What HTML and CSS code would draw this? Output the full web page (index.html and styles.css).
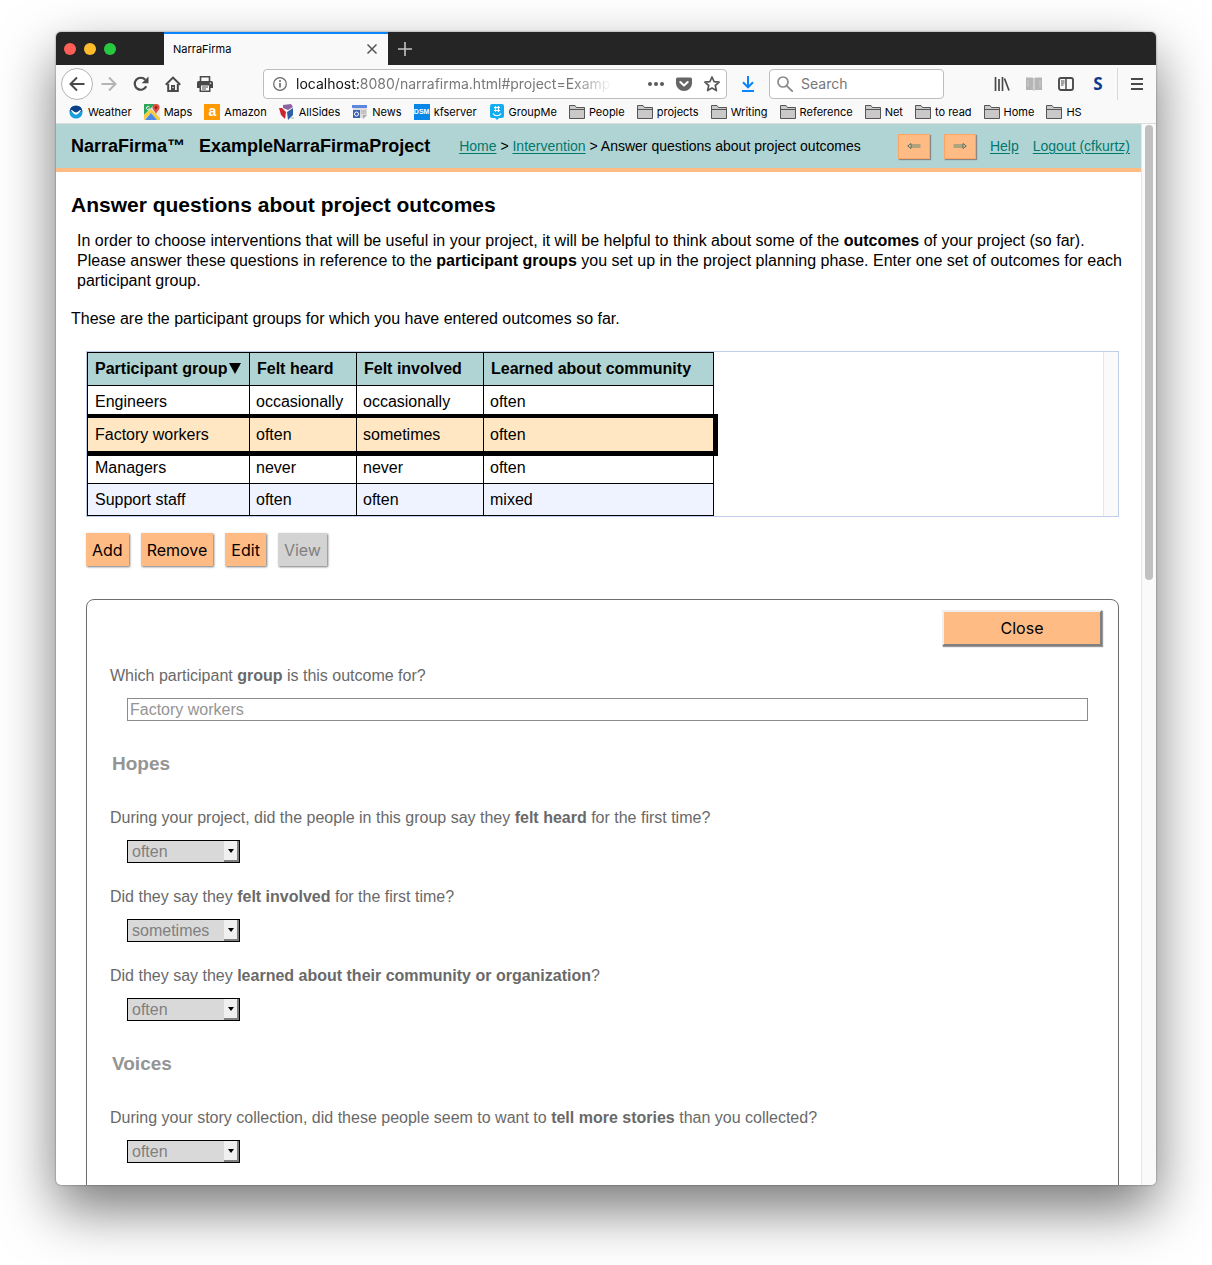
FILE: index.html
```html
<!DOCTYPE html>
<html lang="en">
<head>
<meta charset="utf-8">
<title>NarraFirma</title>
<link rel="stylesheet" href="styles.css">
</head>
<body>
<div class="window">
  <div class="tabbar">
    <div class="lights"><span class="light red"></span><span class="light yellow"></span><span class="light green"></span></div>
    <div class="tab"><span>NarraFirma</span>
      <button class="plain" aria-label="Close tab"><svg width="12" height="12" viewBox="0 0 12 12"><path d="M1.5 1.5l9 9M10.500 1.500l-9 9" stroke="#555" stroke-width="1.500"/></svg></button>
    </div>
    <button class="plain newtab" aria-label="New tab"><svg width="14" height="14" viewBox="0 0 14 14"><path d="M7 0v14M0 7h14" stroke="#c4c4c4" stroke-width="1.600"/></svg></button>
  </div>

  <div class="toolbar">
    <button class="tool back" aria-label="Back"><svg width="16" height="16" viewBox="0 0 16 16"><path d="M15.500 8H1.500M8 1.500L1.500 8L8 14.500" fill="none" stroke="#4a4a4a" stroke-width="2"/></svg></button>
    <button class="tool" aria-label="Forward"><svg width="16" height="16" viewBox="0 0 16 16"><path d="M.5 8h14M8 1.500L14.500 8L8 14.500" fill="none" stroke="#b4b4b4" stroke-width="2"/></svg></button>
    <button class="tool" aria-label="Reload"><svg width="16" height="16" viewBox="0 0 16 16"><path d="M13.200 10.300A6 6 0 1 1 12.300 3.800" fill="none" stroke="#4a4a4a" stroke-width="2.200"/><path d="M15.500 .5v6.800H8.700z" fill="#4a4a4a"/></svg></button>
    <button class="tool" aria-label="Home"><svg width="16" height="16" viewBox="0 0 16 16"><path d="M.8 8.800L8 1.600L15.200 8.800" fill="none" stroke="#4a4a4a" stroke-width="2"/><path d="M3.200 8v7h9.600V8" fill="none" stroke="#4a4a4a" stroke-width="2"/><path d="M6 15V9h4v6z" fill="#4a4a4a"/><circle cx="8" cy="11.500" r=".8" fill="#ddd"/></svg></button>
    <button class="tool" aria-label="Print"><svg width="16" height="16" viewBox="0 0 16 16"><path d="M3.500 5V.8h9V5" fill="none" stroke="#4a4a4a" stroke-width="1.600"/><path d="M1.500 5h13A1.500 1.500 0 0 1 16 6.500V12h-2.500v4h-11v-4H0V6.500A1.500 1.500 0 0 1 1.500 5z" fill="#4a4a4a"/><path d="M4 9.500h8v5H4z" fill="#fff"/><path d="M5 11h6M5 13h4" stroke="#4a4a4a"/><circle cx="13.500" cy="7.300" r=".8" fill="#eee"/></svg></button>
    <div class="space"></div>
    <div class="field urlbar">
      <svg width="14" height="14" viewBox="0 0 14 14"><circle cx="7" cy="7" r="6.300" fill="none" stroke="#666" stroke-width="1.200"/><path d="M7 6v4.500" stroke="#666" stroke-width="1.600"/><circle cx="7" cy="3.900" r="1" fill="#666"/></svg>
      <div class="url"><b>localhost:</b>8080/narrafirma.html#project=Example</div>
      <svg width="16" height="16" viewBox="0 0 16 16"><g fill="#5a5a5a"><circle cx="2" cy="8" r="2"/><circle cx="8" cy="8" r="2"/><circle cx="14" cy="8" r="2"/></g></svg>
      <svg width="16" height="16" viewBox="0 0 16 16"><path d="M1.500 1.500h13A1.500 1.500 0 0 1 16 3v4.500a8 7.500 0 0 1-16 0V3a1.500 1.500 0 0 1 1.500-1.500z" fill="#666"/><path d="M4.300 6L8 9.500L11.700 6" fill="none" stroke="#fff" stroke-width="2" stroke-linecap="round" stroke-linejoin="round"/></svg>
      <svg width="16" height="16" viewBox="0 0 16 16"><path d="M8 1l2.100 4.600 5 .5-3.800 3.400 1.100 5.100L8 12.100l-4.400 2.500 1.100-5.100L.9 6.100l5-.5z" fill="none" stroke="#5a5a5a" stroke-width="1.700" stroke-linejoin="round"/></svg>
    </div>
    <button class="tool download" aria-label="Downloads"><svg width="14" height="16" viewBox="0 0 14 16"><path d="M7 0v11M2 6.300L7 11.300L12 6.300M1 15h12" fill="none" stroke="#0a84ff" stroke-width="2"/></svg></button>
    <div class="field searchbar">
      <svg width="16" height="16" viewBox="0 0 16 16"><circle cx="6" cy="6" r="5" fill="none" stroke="#8a8a8a" stroke-width="1.700"/><path d="M9.800 9.800l5.400 5.400" stroke="#8a8a8a" stroke-width="1.900" stroke-linecap="round"/></svg>
      <input type="text" placeholder="Search" aria-label="Search">
    </div>
    <div class="space"></div>
    <button class="tool" aria-label="Library"><svg width="16" height="16" viewBox="0 0 16 16"><path d="M1.500 1v14M5 3v12M8.500 1v14M10.500 2.500L15 14.500" fill="none" stroke="#4a4a4a" stroke-width="1.700"/></svg></button>
    <button class="tool" aria-label="Reader view"><svg width="16" height="16" viewBox="0 0 16 16"><path d="M0 1.500h6.500L8 2.500l1.500-1H16v12.500H9.500L8 15l-1.500-1H0z" fill="#b5b5b5"/><path d="M8 2.500v12.500" stroke="#f9f9fa" stroke-width=".8"/><path d="M2 4v7M14 4v7" stroke="#ccc"/></svg></button>
    <button class="tool" aria-label="Sidebars"><svg width="16" height="16" viewBox="0 0 16 16"><rect x="1" y="2" width="14" height="12" rx="2" fill="none" stroke="#4a4a4a" stroke-width="1.900"/><path d="M8 2v12" stroke="#4a4a4a" stroke-width="1.500"/><path d="M3 5h3.500M3 7h3.500M3 9h2.500" stroke="#4a4a4a"/></svg></button>
    <button class="tool letter" aria-label="Startpage">S</button>
    <span class="rule"></span>
    <button class="tool" aria-label="Menu"><svg width="12" height="12" viewBox="0 0 12 12"><path d="M0 1h12M0 6h12M0 11h12" stroke="#4a4a4a" stroke-width="2"/></svg></button>
  </div>

  <nav class="bookmarks" aria-label="Bookmarks">
    <a href="#"><svg width="16" height="14" viewBox="0 0 16 16"><circle cx="8" cy="8" r="7.500" fill="#18a0dd"/><path d="M.6 7A7.500 7.500 0 0 1 15.400 7C12 7 11 10 8 10S4 7 .6 7z" fill="#0d3f86"/><path d="M1.500 5.500C5 6 5.500 8.500 8 8.500S11 6 14.500 5.500C12 8 11 11 8 11S4 8 1.500 5.500z" fill="#fff"/></svg>Weather</a>
    <a href="#"><svg width="16" height="16" viewBox="0 0 16 16"><path d="M0 0h16v16H0z" fill="#e8e8e8"/><path d="M0 0h11L0 11z" fill="#2fa55a"/><path d="M0 11L7 5l9 9v2H13L7 9 0 16z" fill="#f6cb3c"/><path d="M1 16l6-7 6 7z" fill="#4a89e8"/><path d="M12 10C11 7 8.500 6 8.500 3.500a3.500 3.500 0 0 1 7 0C15.500 6 13 7 12 10z" fill="#dd4b3e"/><circle cx="12" cy="3.500" r="1.200" fill="#7b2018"/><path d="M5.500 3A1.700 1.700 0 1 0 5.700 5H4.300" fill="none" stroke="#fff"/></svg>Maps</a>
    <a href="#"><span class="badge amazon">a</span>Amazon</a>
    <a href="#"><svg width="16" height="16" viewBox="0 0 16 16"><path d="M4 1l8-1 2 3-5 3-5-2z" fill="#8b62a2"/><path d="M0 4l3 0 4 4-1 7-4-4z" fill="#cc2531"/><path d="M8 8l6-4v7l-5 5z" fill="#2c5fa8"/><path d="M12 14h3" stroke="#aaa"/></svg>AllSides</a>
    <a href="#"><svg width="16" height="16" viewBox="0 0 16 16"><path d="M1 2h14v9l-3 3H1z" fill="#dcdcdc"/><path d="M0 1h15v3H0z" fill="#5c86e0"/><path d="M1 6h7v8H1z" fill="#3c5fb8"/><circle cx="4.500" cy="10" r="2" fill="none" stroke="#fff"/><path d="M9 7h5M9 9h5" stroke="#aaa"/><path d="M11 11h4l-4 4z" fill="#aaa"/></svg>News</a>
    <a href="#"><span class="badge dsm">DSM</span>kfserver</a>
    <a href="#"><svg width="16" height="16" viewBox="0 0 16 16"><path d="M3 0h10a2 2 0 0 1 2 2v10a2 2 0 0 1-2 2h-3l-2 2-2-2H3a2 2 0 0 1-2-2V2a2 2 0 0 1 2-2z" fill="#13aef2"/><path d="M6.500 2v6M9.500 2v6M5 3.500h6M5 6.500h6M4 9.500c2 3 6 3 8 0" fill="none" stroke="#fff" stroke-width="1.200"/></svg>GroupMe</a>
    <a href="#"><svg class="folder" viewBox="0 0 16 14"><path d="M.5 13.500V.5h5.500l1.500 2h8v11z"/><path d="M.5 4.500h15"/></svg>People</a>
    <a href="#"><svg class="folder" viewBox="0 0 16 14"><path d="M.5 13.500V.5h5.500l1.500 2h8v11z"/><path d="M.5 4.500h15"/></svg>projects</a>
    <a href="#"><svg class="folder" viewBox="0 0 16 14"><path d="M.5 13.500V.5h5.500l1.500 2h8v11z"/><path d="M.5 4.500h15"/></svg>Writing</a>
    <a href="#"><svg class="folder" viewBox="0 0 16 14"><path d="M.5 13.500V.5h5.500l1.500 2h8v11z"/><path d="M.5 4.500h15"/></svg>Reference</a>
    <a href="#"><svg class="folder" viewBox="0 0 16 14"><path d="M.5 13.500V.5h5.500l1.500 2h8v11z"/><path d="M.5 4.500h15"/></svg>Net</a>
    <a href="#"><svg class="folder" viewBox="0 0 16 14"><path d="M.5 13.500V.5h5.500l1.500 2h8v11z"/><path d="M.5 4.500h15"/></svg>to read</a>
    <a href="#"><svg class="folder" viewBox="0 0 16 14"><path d="M.5 13.500V.5h5.500l1.500 2h8v11z"/><path d="M.5 4.500h15"/></svg>Home</a>
    <a href="#"><svg class="folder" viewBox="0 0 16 14"><path d="M.5 13.500V.5h5.500l1.500 2h8v11z"/><path d="M.5 4.500h15"/></svg>HS</a>
  </nav>

  <div class="viewport">
    <div class="page">
      <header class="site-header">
        <strong class="brand">NarraFirma™</strong>
        <strong class="project">ExampleNarraFirmaProject</strong>
        <div class="crumbs"><a href="#">Home</a> &gt; <a href="#">Intervention</a> &gt; Answer questions about project outcomes</div>
        <div class="header-tools">
          <button class="arrow" aria-label="Previous page"><svg width="14" height="6" viewBox="0 0 14 6"><path d="M3.500 2H13.500M3.500 4H13.500" stroke="#3d7d78" stroke-width=".8"/><path d="M4 .5L.7 3L4 5.500z" fill="#ffbb84" stroke="#3d6d68" stroke-width=".9"/></svg></button>
          <button class="arrow" aria-label="Next page"><svg width="14" height="6" viewBox="0 0 14 6"><path d="M.5 2H10.500M.5 4H10.500" stroke="#3d7d78" stroke-width=".8"/><path d="M10 .5L13.300 3L10 5.500z" fill="#ffbb84" stroke="#3d6d68" stroke-width=".9"/></svg></button>
          <a href="#">Help</a>
          <a href="#">Logout (cfkurtz)</a>
        </div>
      </header>

      <main>
        <h1>Answer questions about project outcomes</h1>
        <p class="intro">In order to choose interventions that will be useful in your project, it will be helpful to think about some of the <b>outcomes</b> of your project (so far). Please answer these questions in reference to the <b>participant groups</b> you set up in the project planning phase. Enter one set of outcomes for each participant group.</p>
        <p class="lead">These are the participant groups for which you have entered outcomes so far.</p>

        <div class="grid">
          <table>
            <colgroup><col class="c1"><col class="c2"><col class="c3"><col class="c4"></colgroup>
            <thead><tr><th>Participant group<svg width="12" height="12" viewBox="0 0 12 12"><path d="M0 1h12L6 12z"/></svg></th><th>Felt heard</th><th>Felt involved</th><th>Learned about community</th></tr></thead>
            <tbody>
              <tr><td>Engineers</td><td>occasionally</td><td>occasionally</td><td>often</td></tr>
              <tr class="selected"><td>Factory workers</td><td>often</td><td>sometimes</td><td>often</td></tr>
              <tr><td>Managers</td><td>never</td><td>never</td><td>often</td></tr>
              <tr class="alt"><td>Support staff</td><td>often</td><td>often</td><td>mixed</td></tr>
            </tbody>
          </table>
          <div class="gutter"></div>
        </div>

        <div class="actions">
          <button>Add</button><button>Remove</button><button>Edit</button><button disabled>View</button>
        </div>

        <form class="panel">
          <div class="panel-top"><button type="button" class="close">Close</button></div>
          <div class="question">
            <label for="group">Which participant <b>group</b> is this outcome for?</label>
            <input id="group" type="text" value="Factory workers" disabled>
          </div>
          <h2>Hopes</h2>
          <div class="question">
            <label for="heard">During your project, did the people in this group say they <b>felt heard</b> for the first time?</label>
            <div class="choice"><select id="heard" disabled><option>often</option></select><span class="drop"></span></div>
          </div>
          <div class="question">
            <label for="involved">Did they say they <b>felt involved</b> for the first time?</label>
            <div class="choice"><select id="involved" disabled><option>sometimes</option></select><span class="drop"></span></div>
          </div>
          <div class="question">
            <label for="learned">Did they say they <b>learned about their community or organization</b>?</label>
            <div class="choice"><select id="learned" disabled><option>often</option></select><span class="drop"></span></div>
          </div>
          <h2>Voices</h2>
          <div class="question">
            <label for="stories">During your story collection, did these people seem to want to <b>tell more stories</b> than you collected?</label>
            <div class="choice"><select id="stories" disabled><option>often</option></select><span class="drop"></span></div>
          </div>
        </form>
      </main>
    </div>
    <div class="scrollbar"><span class="thumb"></span></div>
  </div>
</div>
</body>
</html>
```

FILE: styles.css
```css
* { box-sizing: border-box; }

body {
  margin: 0;
  padding: 32px 56px 80px;
  height: 100vh;
  background: #fff;
  color: #000;
  font: 16px/20px "Liberation Sans", Arial, sans-serif;
  overflow: hidden;
}

svg { flex: none; display: block; }
button { font: inherit; color: inherit; cursor: pointer; }
h1, h2, p { margin: 0; }

/* browser window */
.window {
  height: 100%;
  display: flex;
  flex-direction: column;
  border-radius: 5px;
  overflow: hidden;
  background: #fff;
  box-shadow: 0 0 2px rgba(0, 0, 0, .5), 0 24px 56px rgba(0, 0, 0, .54);
}

.tabbar {
  flex: none;
  height: 33px;
  display: flex;
  align-items: stretch;
  background: #252525;
  font: 11px/16px Inter, "Open Sans", sans-serif;
}

.lights { display: flex; align-items: center; gap: 8px; width: 108px; padding-left: 8px; }
.light { width: 12px; height: 12px; border-radius: 50%; }
.red { background: #ff5f57; }
.yellow { background: #ffbd2e; }
.green { background: #28c940; }

.tab {
  width: 224px;
  display: flex;
  align-items: center;
  justify-content: space-between;
  padding: 0 10px 2px 9px;
  background: #f9f9fa;
  border-top: 2px solid #0a84ff;
}

.plain { display: flex; align-items: center; padding: 0; border: 0; background: none; }
.newtab { padding-left: 10px; }

.toolbar {
  flex: none;
  height: 38px;
  display: flex;
  align-items: center;
  padding: 0 3px 0 5px;
  background: #f9f9fa;
}

.tool {
  flex: none;
  width: 32px;
  height: 32px;
  display: flex;
  align-items: center;
  justify-content: center;
  padding: 0;
  border: 0;
  background: none;
}
.back { border: 1px solid #b5b5b5; border-radius: 50%; background: #fff; }
.download { margin: 0 5px; }
.letter { font: bold 17px/20px "Open Sans", sans-serif; color: #0b3a8c; }
.rule { width: 1px; height: 32px; margin: 0 3px; background: #d8d8d8; }
.space { flex: 42 1 42px; }

.field {
  height: 30px;
  display: flex;
  align-items: center;
  border: 1px solid #bdbdbd;
  border-radius: 4px;
  background: #fff;
  font: 14px/20px Inter, "Open Sans", sans-serif;
  color: #777;
}
.urlbar { flex: 464 1 464px; min-width: 0; gap: 12px; padding: 0 6px 0 9px; }
.url {
  flex: 1;
  min-width: 0;
  overflow: hidden;
  white-space: nowrap;
  margin: 0 24px 0 -3px;
  mask-image: linear-gradient(to left, transparent, #000 40px);
}
.url b { font-weight: 400; color: #111; }
.searchbar { flex: 175 1 175px; min-width: 0; gap: 8px; padding: 0 7px; }
.searchbar input { flex: 1; min-width: 0; padding: 0; border: 0; outline: 0; background: none; font: inherit; }
.searchbar input::placeholder { color: #777; }

.bookmarks {
  flex: none;
  height: 21px;
  display: flex;
  align-items: center;
  gap: 12px;
  padding: 0 12px 3px;
  background: #f9f9fa;
  border-bottom: 1px solid #dcdcdc;
  font: 11px/16px Inter, "Open Sans", sans-serif;
  white-space: nowrap;
}
.bookmarks a { display: flex; align-items: center; gap: 4px; color: #000; text-decoration: none; }
.folder { width: 16px; height: 14px; fill: #cbc8ca; stroke: #555; }
.badge { width: 16px; height: 16px; color: #fff; text-align: center; }
.amazon { background: #ff9900; font: bold 14px/14px "Liberation Sans", sans-serif; }
.dsm { background: #0a86e8; font: bold 7px/16px "Liberation Sans", sans-serif; }

/* page area */
.viewport { flex: 1; min-height: 0; display: flex; }
.page { flex: 1; min-width: 0; overflow: hidden; }
.scrollbar { flex: none; width: 15px; padding: 1px 3px; background: #fafafa; border-left: 1px solid #e6e6e6; }
.thumb { display: block; width: 8px; height: 43%; border-radius: 4px; background: #c1c1c1; }

.site-header {
  height: 48px;
  display: flex;
  align-items: center;
  padding: 0 11px 0 15px;
  background: #b0d4d4;
  border-bottom: 4px solid #ffbb84;
  font-size: 14px;
  white-space: nowrap;
}
.site-header a { color: #00796f; text-underline-offset: 2px; }
.brand, .project { font-size: 18px; }
.project { margin: 0 29px 0 14px; }
.header-tools { display: flex; align-items: center; gap: 14px; margin-left: auto; }

.arrow {
  width: 32px;
  height: 25px;
  display: flex;
  align-items: center;
  justify-content: center;
  padding: 0;
  border: 1px solid #ffa564;
  background: #ffbb84;
  box-shadow: 1px 1px 1px #888;
}

main { padding: 21px 22px 0 15px; }
h1 { font-size: 21px; line-height: 24px; }
.intro { margin-top: 14px; padding-left: 6px; margin-right: -8px; }
.lead { margin-top: 18px; }

.grid {
  display: flex;
  justify-content: space-between;
  margin: 22px 0 0 15px;
  border: 1px solid #c0cdea;
  overflow: hidden;
}
.gutter { width: 15px; background: #fafafa; border-left: 1px solid #e6e6e6; }

table { border-collapse: collapse; table-layout: fixed; width: 627px; }
.c1 { width: 162px; }
.c2 { width: 107px; }
.c3 { width: 127px; }
.c4 { width: 230px; }
th, td { height: 32px; padding: 0 7px 0 6px; border: 1px solid #000; text-align: left; white-space: nowrap; }
th { height: 33px; padding-left: 7px; background: #b0d4d4; }
td:first-child { padding-left: 7px; }
th svg { display: inline-block; margin-left: 2px; }
.selected { background: #ffe7c4; outline: 4px solid #000; }
.selected td { height: 34px; }
.alt { background: #eff3ff; }

.actions { display: flex; gap: 12px; margin: 16px 0 0 15px; font: 16px/20px Inter, "Open Sans", sans-serif; }
.actions button { height: 33px; padding: 0 6px; border: 0; background: #ffbb84; box-shadow: 1px 1px 2px #777; }
.actions button:disabled { background: #d3d3d3; color: #808080; }

.panel {
  margin: 33px 0 0 15px;
  padding: 10px 16px 40px 23px;
  border: 1px solid #6e6e6e;
  border-radius: 8px;
  color: #696969;
}
.panel-top { display: flex; justify-content: flex-end; margin-bottom: 20px; }
.close {
  width: 160px;
  height: 36px;
  border: 2px solid;
  border-color: #f0f0f0 #808080 #808080 #f0f0f0;
  background: #ffbb84;
  box-shadow: 1px 1px 1px #999;
  color: #000;
  font: 16px/20px Inter, "Open Sans", sans-serif;
}
.question { display: flex; flex-direction: column; margin-bottom: 24px; }
.question label { margin-bottom: 12px; }
.question input {
  height: 23px;
  margin: 0 14px 0 17px;
  padding: 0 2px;
  border: 1px solid #8c8c8c;
  background: #fff;
  color: #949494;
  font: inherit;
}

h2 { margin: 33px 0 34px 2px; font-size: 19px; line-height: 20px; color: #949494; }

.choice { display: grid; width: 113px; height: 23px; margin-left: 17px; border: 1px solid #000; background: #d9d9d9; }
.choice select {
  grid-area: 1 / 1;
  appearance: none;
  padding: 0 18px 0 4px;
  border: 0;
  background: none;
  color: #808080;
  font: inherit;
  opacity: 1;
}
.drop {
  grid-area: 1 / 1;
  justify-self: end;
  display: grid;
  place-items: center;
  width: 15px;
  border: solid #808080;
  border-width: 0 2px 2px 0;
  background: #f0f0f0;
  pointer-events: none;
}
.drop::after { content: ""; border: solid transparent; border-width: 4px 3px 0; border-top-color: #000; }
```
